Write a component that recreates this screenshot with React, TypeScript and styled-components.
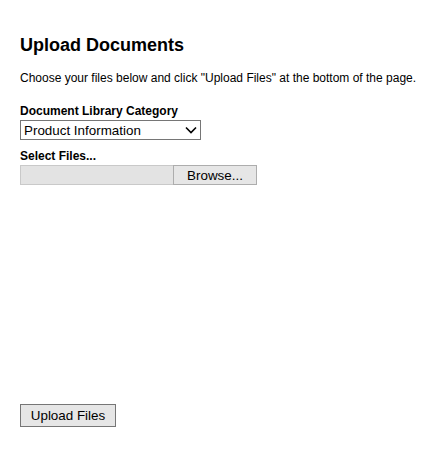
import React, { useState } from 'react';
import styled, { createGlobalStyle } from 'styled-components';

const GlobalStyle = createGlobalStyle`
  body {
    margin: 0;
    background: #ffffff;
    font-family: Arial, "Liberation Sans", sans-serif;
    color: #000;
  }
`;

const Page = styled.div`
  padding: 35px 20px 0 20px;
  display: flex;
  flex-direction: column;
`;

const Title = styled.h1`
  font-size: 18px;
  font-weight: bold;
  margin: 0 0 15px 0;
  line-height: 21px;
`;

const Intro = styled.p`
  font-size: 12px;
  margin: 0 0 19px 0;
  line-height: 14px;
`;

const Label = styled.div`
  font-size: 12px;
  font-weight: bold;
  line-height: 14px;
  margin-bottom: 2px;
`;

const SelectWrap = styled.div`
  position: relative;
  width: 181px;
  height: 20px;
  margin-bottom: 9px;
`;

const Select = styled.select`
  appearance: none;
  width: 100%;
  height: 100%;
  box-sizing: border-box;
  border: 1px solid #767676;
  border-radius: 0;
  background: #fff;
  font-family: Arial, "Liberation Sans", sans-serif;
  font-size: 13.4px;
  padding: 0 0 0 3px;
  color: #000;
  outline: none;
`;

const Chevron = styled.svg`
  position: absolute;
  right: 4px;
  top: 6px;
  pointer-events: none;
`;

const FileRow = styled.div`
  display: flex;
  height: 20px;
  margin-bottom: 219px;
`;

const FileField = styled.div`
  width: 153px;
  box-sizing: border-box;
  background: #e3e3e3;
  border: 1px solid #c9c9c9;
  border-right: none;
`;

const Button = styled.button<{ $dark?: boolean }>`
  font-family: Arial, "Liberation Sans", sans-serif;
  font-size: 13.4px;
  color: #000;
  background: #e6e6e6;
  border: 1px solid ${(p) => (p.$dark ? '#767676' : '#adadad')};
  border-radius: 0;
  padding: 0;
  cursor: pointer;
`;

const BrowseButton = styled(Button)`
  width: 84px;
  height: 20px;
`;

const UploadButton = styled(Button)`
  width: 96px;
  height: 23px;
  align-self: flex-start;
`;

const App: React.FC = () => {
  const [category, setCategory] = useState('Product Information');

  return (
    <>
      <GlobalStyle />
      <Page>
        <Title>Upload Documents</Title>
        <Intro>Choose your files below and click "Upload Files" at the bottom of the page.</Intro>
        <Label>Document Library Category</Label>
        <SelectWrap>
          <Select value={category} onChange={(e) => setCategory(e.target.value)}>
            <option>Product Information</option>
            <option>Technical Data</option>
            <option>Marketing</option>
          </Select>
          <Chevron width="12" height="8" viewBox="0 0 12 8">
            <path d="M1 1.5 L6 6.5 L11 1.5" fill="none" stroke="#000" strokeWidth="1.6" />
          </Chevron>
        </SelectWrap>
        <Label>Select Files...</Label>
        <FileRow>
          <FileField />
          <BrowseButton>Browse...</BrowseButton>
        </FileRow>
        <UploadButton $dark>Upload Files</UploadButton>
      </Page>
    </>
  );
};

export default App;
